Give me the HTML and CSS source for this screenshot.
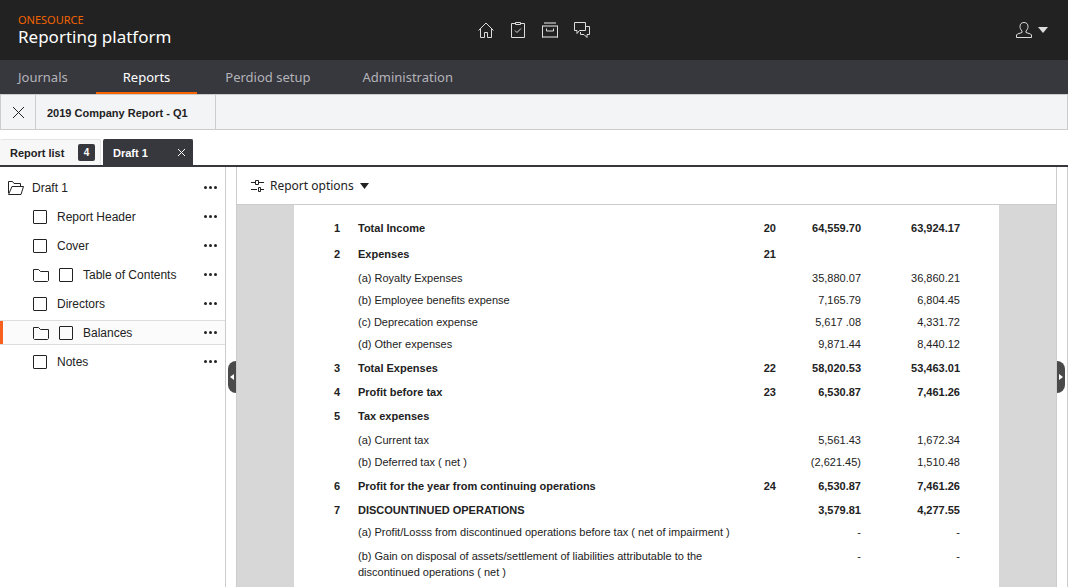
FILE: index.html
```
<!DOCTYPE html>
<html lang="en">
<head>
  <meta charset="UTF-8">
  <meta name="viewport" content="width=device-width, initial-scale=1.0">
  <title>Reporting platform</title>
  <link rel="stylesheet" href="styles.css">
</head>
<body>
  <header class="header">
    <div class="brand">
      <span class="brand-name">ONESOURCE</span>
      <h1>Reporting platform</h1>
    </div>
    <div class="header-icons">
      <button type="button" aria-label="Home">
        <svg width="18" height="18" viewBox="0 0 18 18"><path d="M1.500 9.500 9 2l7.500 7.500M3.500 8v8.500h4v-5h3v5h4V8"/></svg>
      </button>
      <button type="button" aria-label="Tasks">
        <svg width="18" height="18" viewBox="0 0 18 18"><path d="M6 2.500H2.500v14h13v-14H12M6.500 1.500h5v2h-5zM6 9.500l2 2L12 7.500"/></svg>
      </button>
      <button type="button" aria-label="Archive">
        <svg width="18" height="18" viewBox="0 0 18 18"><path class="dim" d="M3 2h12M1 5h16M1 16h16"/><path d="M1.500 5v11.500M16.500 5v11.500M5.500 7.500v2.500h7V7.500"/></svg>
      </button>
      <button type="button" aria-label="Messages">
        <svg width="18" height="18" viewBox="0 0 18 18"><path d="M1.500 1.500h11v8h-6l-2.500 3v-3H1.500zM13 5.500h3.500v8H14v3l-3-3H7.500v-2.500"/></svg>
      </button>
    </div>
    <button type="button" class="account" aria-label="Account">
      <svg width="18" height="18" viewBox="0 0 18 18"><path d="M7 10C5.500 8.500 5 7 5 5.500 5 3 6.500 1.500 9 1.500S13 3 13 5.500C13 7 12.500 8.500 11 10v1.500l4.500 1.500 1 1v2.500h-15V14l1-1L7 11.500z"/></svg>
      <svg class="arrow" width="10" height="6" viewBox="0 0 10 6"><path d="M0 0h10L5 6z"/></svg>
    </button>
  </header>

  <nav class="nav">
    <a href="#">Journals</a>
    <a href="#" class="active">Reports</a>
    <a href="#">Perdiod setup</a>
    <a href="#">Administration</a>
  </nav>

  <div class="report-bar">
    <button type="button" class="close" aria-label="Close report">
      <svg width="13" height="13" viewBox="0 0 13 13"><path d="M1 1l11 11M12 1 1 12"/></svg>
    </button>
    <h2>2019 Company Report - Q1</h2>
  </div>

  <div class="tabs">
    <button type="button" class="tab">Report list <span class="badge">4</span></button>
    <div class="tab tab-active">
      <button type="button">Draft 1</button>
      <button type="button" class="tab-close" aria-label="Close Draft 1">
        <svg width="9" height="9" viewBox="0 0 9 9"><path d="M1 1l7 7M8 1 1 8"/></svg>
      </button>
    </div>
  </div>

  <div class="workspace">
    <aside class="sidebar">
      <ul class="tree">
        <li class="root">
          <svg class="folder-open" width="16" height="16" viewBox="0 0 16 16"><path d="M.5 13V1.500h4l1.500 2h6.500v3M.5 14.500l3.500-8h11.500l-2.500 8z"/></svg>
          <span>Draft 1</span>
          <button type="button" class="more" aria-label="Draft 1 menu"><i></i><i></i><i></i></button>
        </li>
        <li>
          <input type="checkbox" id="reportHeader">
          <label for="reportHeader">Report Header</label>
          <button type="button" class="more" aria-label="Report Header menu"><i></i><i></i><i></i></button>
        </li>
        <li>
          <input type="checkbox" id="cover">
          <label for="cover">Cover</label>
          <button type="button" class="more" aria-label="Cover menu"><i></i><i></i><i></i></button>
        </li>
        <li>
          <svg class="folder" width="16" height="14" viewBox="0 0 16 14"><path d="M.5 1.500h5l2 2h8v9l-1 1h-13l-1-1z"/></svg>
          <input type="checkbox" id="contents">
          <label for="contents">Table of Contents</label>
          <button type="button" class="more" aria-label="Table of Contents menu"><i></i><i></i><i></i></button>
        </li>
        <li>
          <input type="checkbox" id="directors">
          <label for="directors">Directors</label>
          <button type="button" class="more" aria-label="Directors menu"><i></i><i></i><i></i></button>
        </li>
        <li class="selected">
          <svg class="folder" width="16" height="14" viewBox="0 0 16 14"><path d="M.5 1.500h5l2 2h8v9l-1 1h-13l-1-1z"/></svg>
          <input type="checkbox" id="balances">
          <label for="balances">Balances</label>
          <button type="button" class="more" aria-label="Balances menu"><i></i><i></i><i></i></button>
        </li>
        <li>
          <input type="checkbox" id="notes">
          <label for="notes">Notes</label>
          <button type="button" class="more" aria-label="Notes menu"><i></i><i></i><i></i></button>
        </li>
      </ul>
    </aside>

    <div class="gutter">
      <button type="button" class="handle handle-left" aria-label="Collapse left panel">
        <svg width="4" height="6" viewBox="0 0 4 6"><path d="M4 0v6L0 3z"/></svg>
      </button>
    </div>

    <main class="main">
      <div class="options-bar">
        <button type="button" class="options">
          <svg class="sliders" width="13" height="12" viewBox="0 0 13 12"><path d="M0 2.500h4M8 2.500h5M4.500.5h3v4h-3zM0 9.500h6M10 9.500h3M7.500 7.500h2v4h-2z"/></svg>
          Report options
          <svg class="arrow" width="9" height="6" viewBox="0 0 9 6"><path d="M0 0h9L4.500 6z"/></svg>
        </button>
      </div>
      <div class="canvas">
        <div class="paper">
          <table class="report">
            <colgroup>
              <col class="col-num">
              <col>
              <col class="col-note">
              <col class="col-current">
              <col class="col-previous">
            </colgroup>
            <tbody>
              <tr class="head open"><td>1</td><td>Total Income</td><td>20</td><td>64,559.70</td><td>63,924.17</td></tr>
              <tr class="head open"><td>2</td><td>Expenses</td><td>21</td><td></td><td></td></tr>
              <tr><td></td><td>(a) Royalty Expenses</td><td></td><td>35,880.07</td><td>36,860.21</td></tr>
              <tr><td></td><td>(b) Employee benefits expense</td><td></td><td>7,165.79</td><td>6,804.45</td></tr>
              <tr><td></td><td>(c) Deprecation expense</td><td></td><td>5,617 .08</td><td>4,331.72</td></tr>
              <tr><td></td><td>(d) Other expenses</td><td></td><td>9,871.44</td><td>8,440.12</td></tr>
              <tr class="head"><td>3</td><td>Total Expenses</td><td>22</td><td>58,020.53</td><td>53,463.01</td></tr>
              <tr class="head"><td>4</td><td>Profit before tax</td><td>23</td><td>6,530.87</td><td>7,461.26</td></tr>
              <tr class="head open"><td>5</td><td>Tax expenses</td><td></td><td></td><td></td></tr>
              <tr><td></td><td>(a) Current tax</td><td></td><td>5,561.43</td><td>1,672.34</td></tr>
              <tr><td></td><td>(b) Deferred tax ( net )</td><td></td><td>(2,621.45)</td><td>1,510.48</td></tr>
              <tr class="head"><td>6</td><td>Profit for the year from continuing operations</td><td>24</td><td>6,530.87</td><td>7,461.26</td></tr>
              <tr class="head"><td>7</td><td>DISCOUNTINUED OPERATIONS</td><td></td><td>3,579.81</td><td>4,277.55</td></tr>
              <tr><td></td><td>(a) Profit/Losss from discontinued operations before tax ( net of impairment )</td><td></td><td>-</td><td>-</td></tr>
              <tr class="long"><td></td><td>(b) Gain on disposal of assets/settlement of liabilities attributable to the discontinued operations ( net )</td><td></td><td>-</td><td>-</td></tr>
            </tbody>
          </table>
        </div>
      </div>
    </main>

    <div class="gutter gutter-right">
      <button type="button" class="handle handle-right" aria-label="Open right panel">
        <svg width="4" height="6" viewBox="0 0 4 6"><path d="M0 0v6l4-3z"/></svg>
      </button>
    </div>
  </div>
</body>
</html>
```
FILE: styles.css
```
* {
  box-sizing: border-box;
}
html, body, h1, h2, ul {
  padding: 0;
  margin: 0;
}
body {
  display: flex;
  flex-direction: column;
  height: 100vh;
  overflow: hidden;
  background-color: #fff;
  color: #222;
  font-family: "Liberation Sans", Arial, sans-serif;
  font-size: 12px;
}
button {
  padding: 0;
  border: 0;
  background: none;
  color: inherit;
  font: inherit;
  cursor: pointer;
}
svg {
  display: block;
  flex: none;
  fill: none;
  stroke: currentColor;
}
.arrow, .handle svg {
  fill: currentColor;
  stroke: none;
}

/* header */
.header {
  display: grid;
  grid-template-columns: 1fr auto 1fr;
  align-items: center;
  flex: none;
  height: 60px;
  padding: 0 18px;
  background-color: #222;
  color: #ddd;
  font-family: "Noto Sans", sans-serif;
}
.brand-name {
  display: block;
  color: #f26200;
  font-size: 11px;
  line-height: 14px;
}
.brand h1 {
  color: #fff;
  font-size: 17px;
  font-weight: 400;
  line-height: 20px;
}
.header-icons {
  display: flex;
  gap: 14px;
}
.header-icons .dim {
  stroke: #888;
  stroke-width: 2;
}
.account {
  display: flex;
  align-items: center;
  justify-self: end;
  gap: 5px;
  padding-right: 2px;
}

/* main navigation */
.nav {
  display: flex;
  flex: none;
  gap: 4px;
  height: 34px;
  background-color: #37373e;
  font-family: "Noto Sans", sans-serif;
  font-size: 13px;
  line-height: 34px;
}
.nav a {
  padding: 0 24px;
  color: #b4b4b8;
  text-decoration: none;
}
.nav a:first-child {
  padding-left: 18px;
}
.nav .active {
  padding: 0 27px;
  border-bottom: 2px solid #fa6400;
  color: #fff;
}

/* opened report */
.report-bar {
  display: flex;
  flex: none;
  height: 36px;
  border: 1px solid #ccc;
  background-color: #f3f4f6;
}
.close {
  display: flex;
  align-items: center;
  justify-content: center;
  width: 35px;
  border-right: 1px solid #ccc;
}
.report-bar h2 {
  width: 180px;
  padding-left: 11px;
  border-right: 1px solid #ccc;
  font-size: 11px;
  line-height: 36px;
}

/* tabs */
.tabs {
  display: flex;
  flex: none;
  gap: 2px;
  margin-top: 9px;
  border-bottom: 2px solid #37373e;
}
.tab {
  display: flex;
  align-items: center;
  justify-content: space-between;
  width: 101px;
  height: 26px;
  padding: 0 5px 0 10px;
  border: 1px solid #e4e4e4;
  border-left: 0;
  border-bottom: 0;
  border-radius: 2px 2px 0 0;
  background-color: #f7f7f7;
  font-size: 11px;
  font-weight: 700;
}
.tab-active {
  width: 90px;
  padding: 0 6px 0 10px;
  border-color: #37373e;
  background-color: #37373e;
  color: #fff;
}
.badge {
  width: 17px;
  border-radius: 2px;
  background-color: #37373e;
  color: #fff;
  font-size: 10px;
  line-height: 17px;
  text-align: center;
}

/* workspace */
.workspace {
  display: flex;
  flex: 1;
  min-height: 0;
}
.sidebar {
  flex: none;
  width: 226px;
  border-right: 1px solid #ccc;
}
.tree {
  display: flex;
  flex-direction: column;
  gap: 4px;
  padding-top: 8px;
  list-style: none;
}
.tree li {
  display: flex;
  align-items: center;
  gap: 10px;
  height: 25px;
  padding: 0 8px 0 33px;
  font-size: 12px;
}
.tree .root {
  gap: 8px;
  padding-left: 8px;
}
.tree .selected {
  padding-left: 30px;
  border-top: 1px solid #ddd;
  border-bottom: 1px solid #ddd;
  background-color: #fbfbfb;
  box-shadow: inset 3px 0 #f7601f;
  padding-left: 33px;
}
.tree input[type=checkbox] {
  appearance: none;
  flex: none;
  width: 14px;
  height: 14px;
  margin: 0;
  border: 1px solid #222;
  border-radius: 1px;
}
.tree input[type=checkbox]:checked {
  background-color: #37373e;
}
.more {
  display: flex;
  gap: 2px;
  margin-left: auto;
}
.more i {
  width: 3px;
  height: 3px;
  border-radius: 50%;
  background-color: #222;
}

/* gutters with panel handles */
.gutter {
  display: flex;
  align-items: center;
  justify-content: flex-end;
  flex: none;
  width: 10px;
}
.gutter-right {
  justify-content: flex-start;
  width: 11px;
  border-right: 1px solid #ccc;
}
.handle {
  display: flex;
  align-items: center;
  justify-content: center;
  width: 8px;
  height: 32px;
  background-color: #4a4a4a;
  color: #fff;
}
.handle-left {
  border-radius: 8px 0 0 8px;
}
.handle-right {
  border-radius: 0 8px 8px 0;
}

/* report */
.main {
  display: flex;
  flex: 1;
  flex-direction: column;
  min-width: 0;
  border: 1px solid #ccc;
  border-top: 0;
  border-bottom: 0;
}
.options-bar {
  flex: none;
  height: 38px;
  padding-left: 14px;
  border-bottom: 1px solid #ccc;
}
.options {
  display: flex;
  align-items: center;
  gap: 6px;
  height: 37px;
  font-family: "Noto Sans", sans-serif;
  font-size: 12px;
}
.canvas {
  flex: 1;
  min-height: 0;
  padding: 0 57px;
  overflow: hidden;
  background-color: #d7d7d7;
}
.paper {
  min-height: 100%;
  padding: 10px 39px 0 40px;
  background-color: #fff;
}
.report {
  width: 100%;
  border-collapse: collapse;
  table-layout: fixed;
  font-size: 11px;
  line-height: 16px;
}
.col-num {
  width: 24px;
}
.col-note {
  width: 26px;
}
.col-current {
  width: 85px;
}
.col-previous {
  width: 99px;
}
.report td {
  height: 22px;
  padding: 3px 0;
  vertical-align: top;
}
.report td:nth-child(n+3) {
  text-align: right;
}
.report .head td {
  padding-top: 5px;
  font-weight: 700;
}
.report .open td {
  padding-bottom: 5px;
}
.report .long td {
  padding-top: 5px;
}
```
